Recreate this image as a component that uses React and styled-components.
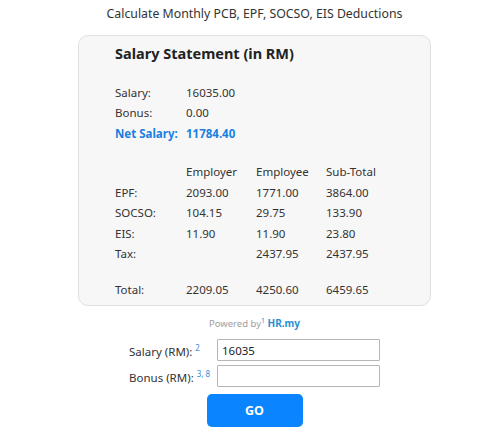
import React from "react";
import styled, { createGlobalStyle } from "styled-components";

const GlobalStyle = createGlobalStyle`
  body {
    margin: 0;
    background: #ffffff;
    font-family: "Noto Sans", "Open Sans", sans-serif;
    color: #333333;
  }
`;

const Page = styled.div`
  width: 500px;
  padding-left: 9px;
  box-sizing: border-box;
  display: flex;
  flex-direction: column;
  align-items: center;
`;

const Title = styled.h1`
  margin: 5px 0 0;
  font-size: 12.3px;
  font-weight: 400;
  line-height: 18px;
  color: #333333;
`;

const Card = styled.div`
  margin-top: 12px;
  width: 353px;
  height: 271px;
  box-sizing: border-box;
  padding: 8px 0 0 36px;
  background: #f7f7f7;
  border: 1px solid #e0e0e0;
  border-radius: 10px;
`;

const Heading = styled.h2`
  margin: 0;
  font-size: 14.5px;
  font-weight: 700;
  line-height: 19px;
  color: #222222;
`;

const Grid = styled.div`
  display: grid;
  grid-template-columns: 71px 70px 70px auto;
  grid-auto-rows: 20.5px;
  align-items: center;
  font-size: 11.5px;
  margin-top: ${(p) => p.$top || 0}px;
`;

const Cell = styled.div`
  white-space: nowrap;
  color: ${(p) => (p.$accent ? "#1a7fe0" : "#333333")};
  font-weight: ${(p) => (p.$accent ? 700 : 400)};
`;

const Powered = styled.div`
  margin-top: 8px;
  font-size: 9.5px;
  color: #a0a0a0;
  line-height: 14px;
  & sup {
    font-size: 7px;
    color: #3a8fd0;
  }
  & b {
    color: #2a8fd0;
    font-size: 10px;
  }
`;

const Form = styled.form`
  margin-top: 8px;
  display: grid;
  grid-template-columns: 88px 163px;
  row-gap: 4px;
  align-items: center;
`;

const Label = styled.label`
  font-size: 11.5px;
  color: #333333;
  & sup {
    font-size: 8px;
    color: #3a8fd0;
  }
`;

const Input = styled.input`
  width: 163px;
  height: 22px;
  box-sizing: border-box;
  border: 1px solid #b5b5b5;
  border-radius: 1px;
  padding: 0 4px;
  font-family: inherit;
  font-size: 11.5px;
  color: #222222;
  outline: none;
`;

const Button = styled.button`
  margin-top: 7px;
  width: 96px;
  height: 33px;
  border: none;
  border-radius: 5px;
  background: #0a84ff;
  color: #ffffff;
  font-family: inherit;
  font-weight: 700;
  font-size: 12.5px;
`;

const summary = [
  ["Salary:", "16035.00"],
  ["Bonus:", "0.00"],
];

const rows = [
  ["", "Employer", "Employee", "Sub-Total"],
  ["EPF:", "2093.00", "1771.00", "3864.00"],
  ["SOCSO:", "104.15", "29.75", "133.90"],
  ["EIS:", "11.90", "11.90", "23.80"],
  ["Tax:", "", "2437.95", "2437.95"],
];

const App = () => (
  <Page>
    <GlobalStyle />
    <Title>Calculate Monthly PCB, EPF, SOCSO, EIS Deductions</Title>
    <Card>
      <Heading>Salary Statement (in RM)</Heading>
      <Grid $top={19}>
        {summary.map(([k, v]) => (
          <React.Fragment key={k}>
            <Cell>{k}</Cell>
            <Cell>{v}</Cell>
            <Cell />
            <Cell />
          </React.Fragment>
        ))}
        <Cell $accent>Net Salary:</Cell>
        <Cell $accent>11784.40</Cell>
        <Cell />
        <Cell />
      </Grid>
      <Grid $top={18}>
        {rows.map((r, i) =>
          r.map((c, j) => <Cell key={`${i}-${j}`}>{c}</Cell>)
        )}
      </Grid>
      <Grid $top={15}>
        <Cell>Total:</Cell>
        <Cell>2209.05</Cell>
        <Cell>4250.60</Cell>
        <Cell>6459.65</Cell>
      </Grid>
    </Card>
    <Powered>
      Powered by<sup>1</sup> <b>HR.my</b>
    </Powered>
    <Form onSubmit={(e) => e.preventDefault()}>
      <Label>
        Salary (RM): <sup>2</sup>
      </Label>
      <Input defaultValue="16035" />
      <Label>
        Bonus (RM): <sup>3, 8</sup>
      </Label>
      <Input defaultValue="" />
    </Form>
    <Button type="button">GO</Button>
  </Page>
);

export default App;
